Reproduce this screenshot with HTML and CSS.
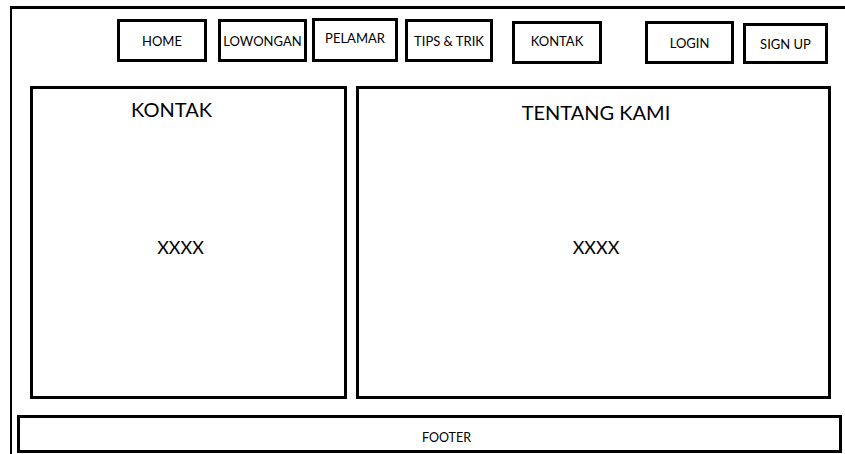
FILE: index.html
```html
<!DOCTYPE html>
<html lang="id">
<head>
    <meta charset="UTF-8">
    <meta name="viewport" content="width=device-width, initial-scale=1.0">
    <title>Kontak - Lowongan Kerja</title>
    <link rel="stylesheet" href="styles.css">
</head>
<body>

    <div class="page">
        <!-- Navigasi atas -->
        <header class="header">
            <nav class="nav">
                <a href="#" class="nav-item nav-home">HOME</a>
                <a href="#" class="nav-item nav-lowongan">LOWONGAN</a>
                <a href="#" class="nav-item nav-pelamar">PELAMAR</a>
                <a href="#" class="nav-item nav-tips">TIPS &amp; TRIK</a>
                <a href="#" class="nav-item nav-kontak">KONTAK</a>
            </nav>
            <nav class="nav nav-auth">
                <a href="#" class="nav-item nav-login">LOGIN</a>
                <a href="#" class="nav-item nav-signup">SIGN UP</a>
            </nav>
        </header>

        <!-- Isi halaman -->
        <main class="content">
            <section class="panel panel-kontak">
                <h2 class="panel-title">KONTAK</h2>
                <p class="panel-body">XXXX</p>
            </section>
            <section class="panel panel-tentang">
                <h2 class="panel-title">TENTANG KAMI</h2>
                <p class="panel-body">XXXX</p>
            </section>
        </main>

        <footer class="footer">FOOTER</footer>
    </div>

</body>
</html>
```

FILE: styles.css
```css
* {
    box-sizing: border-box;
}
html, body {
    margin: 0;
    height: 100%;
    overflow: hidden;
    background: #fff;
}
body {
    font-family: Lato, "Open Sans", sans-serif;
    color: #000;
}
.page {
    margin: 6px 0 0 10px;
    height: 460px;
    border-top: 3px solid #000;
    border-left: 2px solid #000;
}

/* Navigasi */
.header {
    display: flex;
    align-items: flex-start;
    height: 77px;
    padding: 10px 0 0 105px;
}
.nav {
    display: flex;
    align-items: flex-start;
}
.nav-auth {
    margin-left: 43px;
    gap: 9px;
}
.nav-item {
    display: flex;
    align-items: center;
    justify-content: center;
    width: 90px;
    height: 43px;
    border: 3px solid #000;
    color: #000;
    text-decoration: none;
    font-size: 13px;
}
.nav-lowongan { width: 89px; margin-left: 11px; }
.nav-pelamar { width: 86px; margin-left: 5px; margin-top: -1px; height: 44px; padding-bottom: 4px; }
.nav-tips { width: 88px; margin-left: 7px; }
.nav-kontak { margin-left: 19px; margin-top: 2px; padding-bottom: 4px; }
.nav-login { width: 89px; margin-top: 2px; }
.nav-signup { width: 85px; margin-top: 4px; height: 41px; }

/* Panel isi */
.content {
    display: flex;
    gap: 9px;
    padding-left: 18px;
}
.panel {
    display: flex;
    flex-direction: column;
    align-items: center;
    height: 313px;
    border: 3px solid #000;
}
.panel-kontak {
    width: 317px;
    padding-right: 16px;
}
.panel-tentang {
    width: 475px;
    padding-left: 5px;
}
.panel-title {
    margin: 8px 0 0;
    font-size: 20px;
    font-weight: normal;
}
.panel-kontak .panel-title {
    padding-right: 18px;
}
.panel-tentang .panel-title {
    margin-top: 11px;
}
.panel-body {
    margin: 115px 0 0;
    font-size: 18px;
}
.panel-tentang .panel-body {
    margin-top: 112px;
}

/* Footer */
.footer {
    display: flex;
    align-items: center;
    justify-content: center;
    width: 825px;
    height: 38px;
    margin: 16px 0 0 5px;
    padding: 6px 0 0 34px;
    border: 3px solid #000;
    font-size: 12.5px;
}
```
